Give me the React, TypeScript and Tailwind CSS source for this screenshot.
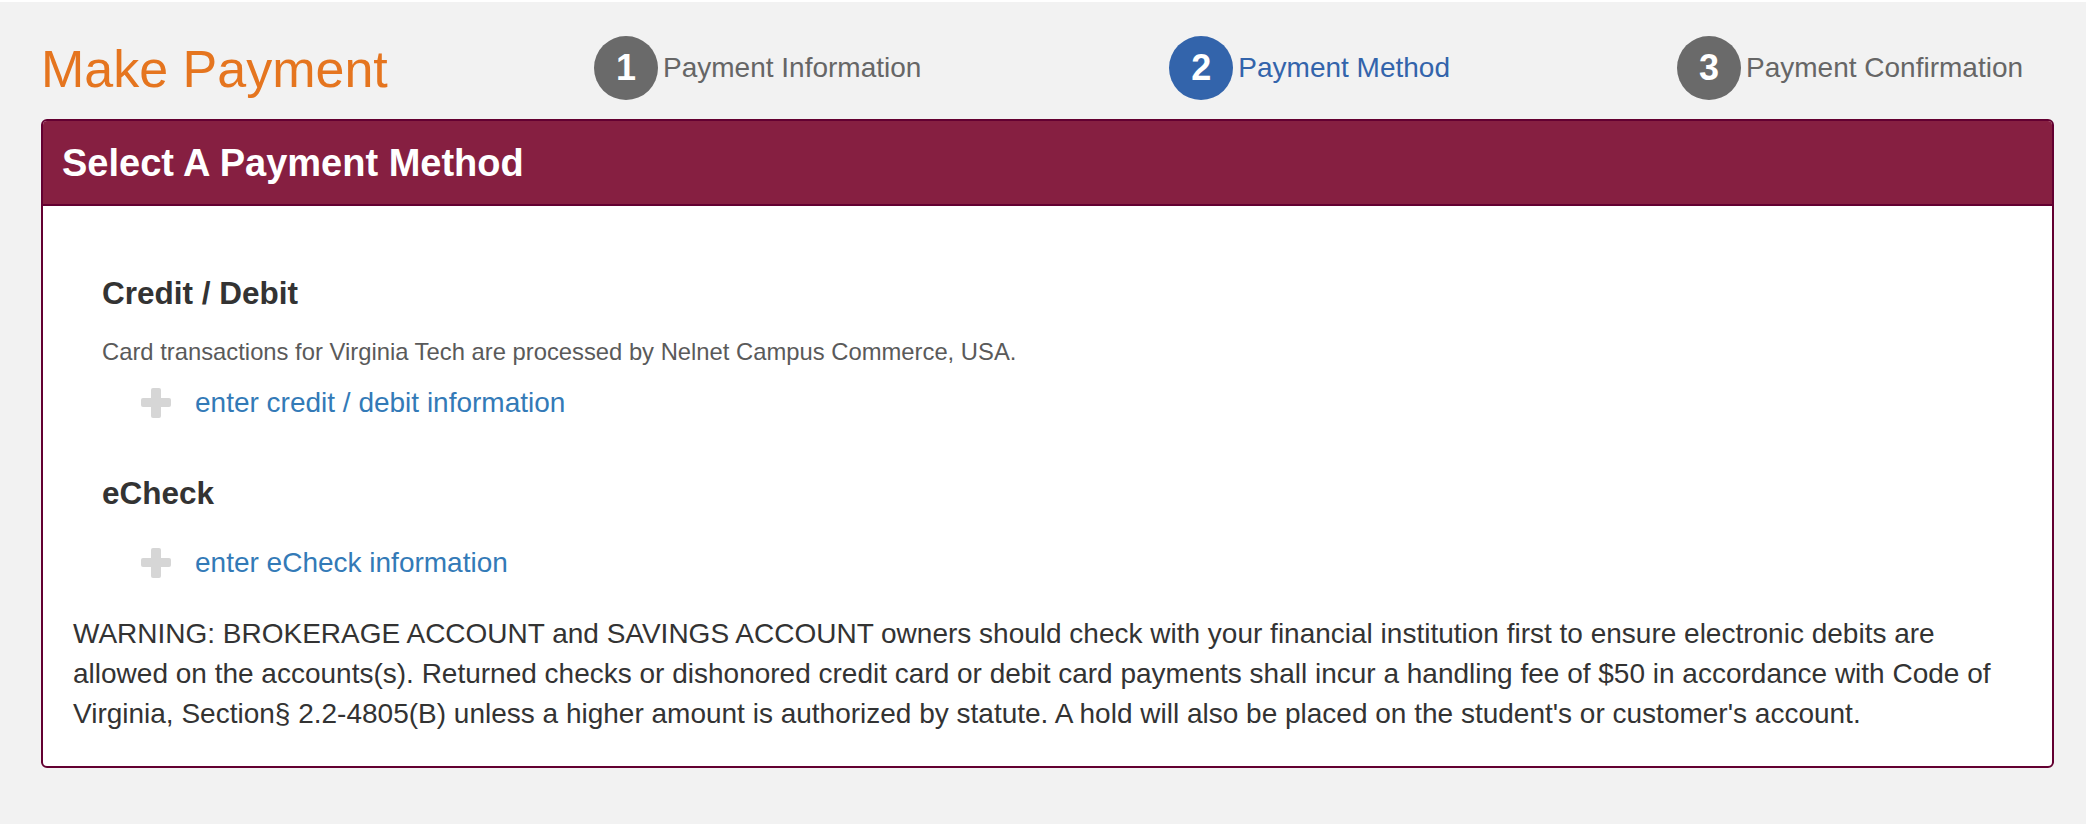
import React from 'react';

const Plus = () => (
  <svg width="30" height="30" viewBox="0 0 30 30" className="shrink-0">
    <rect x="0" y="10" width="30" height="9" rx="2" fill="#d6d6d6" />
    <rect x="10" y="0" width="10" height="30" rx="2" fill="#d6d6d6" />
  </svg>
);

const Step = ({ n, label, active }: { n: number; label: string; active?: boolean }) => (
  <div className="flex items-center h-[64px]">
    <div
      className={`w-[64px] h-[64px] rounded-full flex items-center justify-center text-white font-bold text-[36px] leading-none ${
        active ? 'bg-[#3364ab]' : 'bg-[#6a6a6a]'
      }`}
    >
      {n}
    </div>
    <span className={`ml-[5px] text-[28px] leading-[64px] ${active ? 'text-[#3364ab]' : 'text-[#666666]'}`}>
      {label}
    </span>
  </div>
);

const MethodLink = ({ label }: { label: string }) => (
  <div className="flex items-center h-[40px] ml-[39px]">
    <Plus />
    <a href="#" className="ml-[24px] text-[28px] leading-[40px] text-[#337ab7]">
      {label}
    </a>
  </div>
);

export default function App() {
  return (
    <div className="min-h-screen bg-[#f2f2f2] border-t-2 border-white pl-[41px] pr-[32px] pt-[34px] font-['Liberation_Sans',Arial,sans-serif]">
      {/* Title + steps */}
      <div className="flex items-center h-[64px]">
        <div className="w-[553px] shrink-0">
          <h1 className="text-[52px] leading-[64px] mt-[2px] text-[#e5751f] font-normal">Make Payment</h1>
        </div>
        <Step n={1} label="Payment Information" />
        <div className="ml-[248px]">
          <Step n={2} label="Payment Method" active />
        </div>
        <div className="ml-[227px]">
          <Step n={3} label="Payment Confirmation" />
        </div>
      </div>

      {/* Card */}
      <div className="mt-[19px] border-2 border-[#630031] rounded-[6px] overflow-hidden bg-white">
        <div className="h-[85px] bg-[#861f41] border-b-2 border-[#630031] flex items-center pl-[19px]">
          <h2 className="text-white font-bold text-[38px] leading-none">Select A Payment Method</h2>
        </div>

        <div className="px-[30px] pt-[69px] pb-[32px]">
          <div className="pl-[29px]">
            <h3 className="text-[31.5px] leading-[36px] font-bold text-[#333333]">Credit / Debit</h3>
            <p className="mt-[26px] text-[23.8px] leading-[30px] text-[#5a5a5a]">
              Card transactions for Virginia Tech are processed by Nelnet Campus Commerce, USA.
            </p>
            <div className="mt-[16px]">
              <MethodLink label="enter credit / debit information" />
            </div>

            <h3 className="mt-[52px] text-[31.5px] leading-[36px] font-bold text-[#333333]">eCheck</h3>
            <div className="mt-[32px]">
              <MethodLink label="enter eCheck information" />
            </div>
          </div>

          <p className="mt-[31px] text-[28px] leading-[40px] text-[#333333]">
            WARNING: BROKERAGE ACCOUNT and SAVINGS ACCOUNT owners should check with your financial institution first
            to ensure electronic debits are allowed on the accounts(s). Returned checks or dishonored credit card or
            debit card payments shall incur a handling fee of $50 in accordance with Code of Virginia, Section§
            2.2-4805(B) unless a higher amount is authorized by statute. A hold will also be placed on the student's
            or customer's account.
          </p>
        </div>
      </div>
    </div>
  );
}
